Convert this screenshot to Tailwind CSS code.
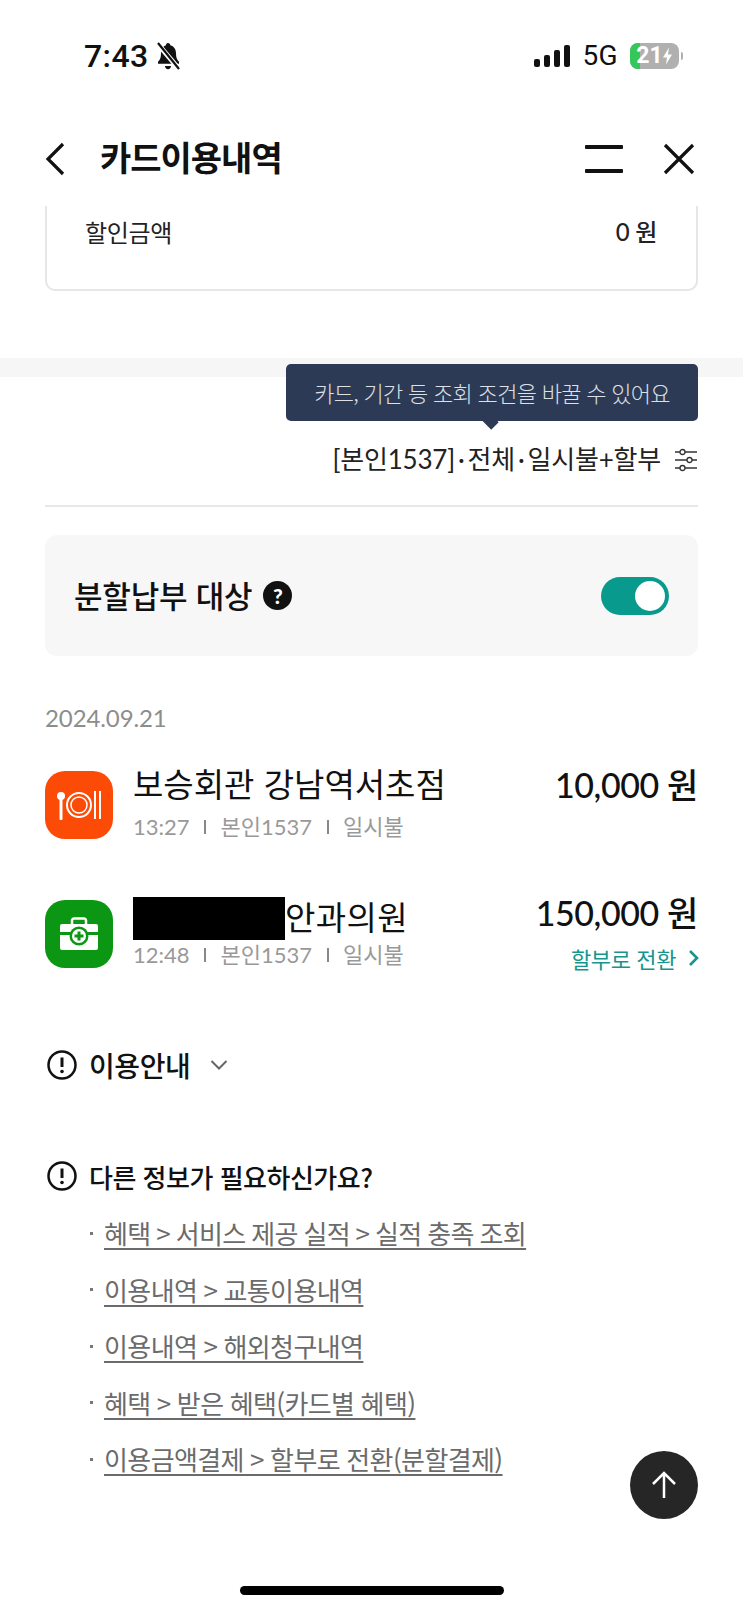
<!DOCTYPE html>
<html lang="ko">
<head>
    <meta charset="UTF-8">
    <meta name="viewport" content="width=device-width, initial-scale=1.0">
    <title>카드이용내역</title>
    <script src="https://cdn.jsdelivr.net/npm/@tailwindcss/browser@4"></script>
</head>
<body class="bg-white text-[#111] font-['Lato','Noto_Sans_CJK_KR',sans-serif] overflow-hidden">
<div class="relative w-[743px] h-[1611px] overflow-hidden">

    <!-- status bar -->
    <div class="flex justify-between items-center h-[112px] pl-[84px] pr-[60px]">
        <div class="flex items-center gap-[6px]">
            <span class="font-['Roboto',sans-serif] text-[32px] font-medium tracking-[0.4px]">7:43</span>
            <svg class="w-[26px] h-[28px]" viewBox="0 0 26 28" fill="#111"><path d="M13 1c1.400 0 2.200 1 2.300 2.200 3.700 1 5.700 4 5.700 8 0 4.500 1 6.500 3 8.500v2H3v-2c2-2 3-4 3-8.500 0-4 2-7 5-8C11 2 11.600 1 13 1z"/><path d="M10 24h6c0 2-1.300 3.200-3 3.200S10 26 10 24z"/><path d="M2 1l22 26" stroke="#fff" stroke-width="5"/><path d="M3 1l21 26" stroke="#111" stroke-width="2.200"/></svg>
        </div>
        <div class="flex items-center">
            <svg class="w-[37px] h-[24px]" viewBox="0 0 37 24" fill="#111"><rect x="1" y="15" width="6" height="8" rx="2"/><rect x="11" y="11" width="6" height="12" rx="2"/><rect x="21" y="6" width="6" height="17" rx="2"/><rect x="31" y="1" width="6" height="22" rx="2"/></svg>
            <span class="font-['Roboto',sans-serif] text-[28px] ml-[12px] mr-[12px] tracking-[0.4px]">5G</span>
            <div class="relative w-[49px] h-[26px] rounded-[8px] bg-[#b0b0b0] overflow-hidden flex items-center justify-center">
                <div class="absolute left-0 top-0 bottom-0 w-[10px] bg-[#34c759]"></div>
                <span class="relative font-['Roboto',sans-serif] font-bold text-white text-[23px] -ml-[10px]">21</span>
                <svg class="absolute right-[6px] top-[4px] w-[11px] h-[18px]" viewBox="0 0 11 17" fill="#fff"><path d="M7 0L1 10h4l-1 7 6-10H6z"/></svg>
            </div>
            <div class="w-[2px] h-[8px] ml-[2px] bg-[#b0b0b0] rounded-r-sm"></div>
        </div>
    </div>

    <!-- header -->
    <div class="relative z-10 flex items-center h-[94px] bg-white pl-[45px] pr-[48px]">
        <svg class="w-[20px] h-[34px]" viewBox="0 0 20 34" fill="none" stroke="#111" stroke-width="3.200"><path d="M18 2L3 17l15 15"/></svg>
        <h1 class="ml-[35px] -mt-[5px] font-['Noto_Sans_CJK_KR',sans-serif] text-[34px] font-bold tracking-[-1px] flex-1">카드이용내역</h1>
        <svg class="w-[38px] h-[30px] mr-[40px]" viewBox="0 0 38 30" fill="#111"><rect x="0" y="1" width="38" height="4" rx="1"/><rect x="0" y="25" width="38" height="4" rx="1"/></svg>
        <svg class="w-[32px] h-[32px]" viewBox="0 0 32 32" fill="none" stroke="#111" stroke-width="3.200"><path d="M2 2l28 28M30 2L2 30"/></svg>
    </div>

    <!-- summary card tail -->
    <div class="mx-[45px] h-[85px] border-x-2 border-b-2 border-[#e6e6e6] rounded-b-[10px] flex justify-between items-start pl-[38px] pr-[39px] pt-[8px] font-['Noto_Sans_CJK_KR',sans-serif] text-[24px] text-[#222] tracking-[-0.3px]">
        <span>할인금액</span>
        <span class="font-['Lato','Noto_Sans_CJK_KR',sans-serif] font-medium">0 원</span>
    </div>

    <!-- grey band -->
    <div class="h-[19px] mt-[67px] bg-[#f6f6f6]"></div>

    <!-- filter row -->
    <div class="relative mx-[45px]">
        <div class="absolute right-0 -top-[13px] w-[412px] h-[57px] bg-[#2d3a55] rounded-[5px] flex items-center justify-center text-[#dde0e6] text-[22px] font-['Noto_Sans_CJK_KR',sans-serif] font-light tracking-[-0.7px]">
            카드, 기간 등 조회 조건을 바꿀 수 있어요
            <div class="absolute left-[197px] -bottom-[7px] w-[14px] h-[14px] bg-[#2d3a55] rotate-45 scale-y-75"></div>
        </div>
        <div class="flex justify-end items-center h-[130px] pt-[37px] border-b-2 border-[#e8e8e8] text-[26px] text-[#222]">
            <span class="tracking-[-0.2px]">[본인1537]<span class="mx-[3px]">·</span>전체<span class="mx-[3px]">·</span>일시불+할부</span>
            <svg class="w-[24px] h-[24px] ml-[13px]" viewBox="0 0 24 24" fill="none" stroke="#333" stroke-width="1.300"><path d="M1 4h5M11 4h12M1 12h12M18 12h5M1 20h5M11 20h12"/><circle cx="8.500" cy="4" r="2.500"/><circle cx="15.500" cy="12" r="2.500"/><circle cx="8.500" cy="20" r="2.500"/></svg>
        </div>

        <!-- installment toggle -->
        <div class="mt-[28px] h-[121px] bg-[#f7f7f7] rounded-[12px] flex items-center justify-between pl-[29px] pr-[29px]">
            <div class="flex items-center gap-[11px]">
                <span class="font-['Noto_Sans_CJK_KR',sans-serif] text-[31px] font-medium tracking-[-0.2px]">분할납부 대상</span>
                <span class="w-[29px] h-[29px] rounded-full bg-[#111] text-white flex items-center justify-center text-[21px] font-black">?</span>
            </div>
            <div class="w-[68px] h-[38px] rounded-full bg-[#099a8e] flex items-center justify-end pr-[4px]">
                <div class="w-[30px] h-[30px] rounded-full bg-white"></div>
            </div>
        </div>

        <!-- list -->
        <div class="mt-[47px] text-[24px] text-[#8d8d8d] leading-[30px] tracking-[-0.1px]">2024.09.21</div>

        <div class="flex mt-[35px] h-[68px]">
            <div class="w-[68px] h-[68px] mt-[3px] rounded-[20px] bg-[#fb4b06] flex items-center justify-center">
                <svg class="w-[44px] h-[30px]" viewBox="0 0 44 30" fill="none" stroke="#fff"><circle cx="4" cy="6" r="4" fill="#fff" stroke="none"/><rect x="2.500" y="6" width="3" height="24" rx="1" fill="#fff" stroke="none"/><circle cx="22" cy="15" r="12" stroke-width="2"/><circle cx="22" cy="15" r="8" stroke-width="1.500"/><path d="M38 1v28M43 1v28" stroke-width="2"/></svg>
            </div>
            <div class="ml-[20px] flex-1">
                <div class="text-[33px] leading-[40px] -mt-[5px] font-['Noto_Sans_CJK_KR',sans-serif] text-[#111]">보승회관 강남역서초점</div>
                <div class="mt-[9px] text-[22px] leading-[30px] text-[#999] flex items-center"><span>13:27</span><span class="w-[2px] h-[14px] bg-[#888] mx-[14.5px]"></span><span>본인1537</span><span class="w-[2px] h-[14px] bg-[#888] mx-[14.5px]"></span><span>일시불</span></div>
            </div>
            <div class="text-[34px] leading-[42px] -mt-[4px] font-medium tracking-[-0.4px]">10,000 원</div>
        </div>

        <div class="flex mt-[61px] h-[72px]">
            <div class="w-[68px] h-[68px] mt-[3px] rounded-[20px] bg-[#0b9713] flex items-center justify-center">
                <svg class="w-[38px] h-[34px]" viewBox="0 0 38 34" fill="none"><path d="M12 8V3.500C12 2.500 13 1.500 14 1.500h10c1 0 2 1 2 2V8" stroke="#fff" stroke-width="2.500"/><path d="M2 7h34a2 2 0 012 2v6H0V9a2 2 0 012-2zM0 18h38v13a2 2 0 01-2 2H2a2 2 0 01-2-2z" fill="#fff"/><circle cx="19" cy="19" r="9.500" fill="#0b9713"/><circle cx="19" cy="19" r="7" fill="#fff"/><path d="M19 14.500v9M14.500 19h9" stroke="#0b9713" stroke-width="3"/></svg>
            </div>
            <div class="ml-[20px] flex-1">
                <div class="flex items-center h-[43px]">
                    <span class="w-[152px] h-[43px] bg-black"></span>
                    <span class="text-[33px] leading-[40px] -mt-[6px] font-['Noto_Sans_CJK_KR',sans-serif] text-[#111] tracking-[0.4px]">안과의원</span>
                </div>
                <div class="text-[22px] leading-[30px] text-[#999] flex items-center"><span>12:48</span><span class="w-[2px] h-[14px] bg-[#888] mx-[14.5px]"></span><span>본인1537</span><span class="w-[2px] h-[14px] bg-[#888] mx-[14.5px]"></span><span>일시불</span></div>
            </div>
            <div class="flex flex-col items-end -mt-[5px]">
                <div class="text-[34px] leading-[42px] font-medium tracking-[-0.4px]">150,000 원</div>
                <div class="mt-[9px] flex items-center text-[22px] leading-[30px] text-[#16958c] font-['Noto_Sans_CJK_KR',sans-serif] tracking-[-0.4px]">할부로 전환
                    <svg class="w-[12px] h-[18px] ml-[12px] -mr-[2px]" viewBox="0 0 12 18" fill="none" stroke="#16958c" stroke-width="2.600"><path d="M2 2l7 7-7 7"/></svg>
                </div>
            </div>
        </div>

        <!-- notice -->
        <div class="flex items-center mt-[76px] h-[40px] pl-[2px] font-['Noto_Sans_CJK_KR',sans-serif]">
            <svg class="w-[30px] h-[30px]" viewBox="0 0 30 30" fill="none" stroke="#111" stroke-width="2.500"><circle cx="15" cy="15" r="13.500"/><path d="M15 7.500v9.500" stroke-width="3"/><circle cx="15" cy="21.500" r="1.800" fill="#111" stroke="none"/></svg>
            <span class="ml-[12px] text-[28px] font-medium tracking-[-0.4px]">이용안내</span>
            <svg class="w-[18px] h-[12px] ml-[20px]" viewBox="0 0 18 12" fill="none" stroke="#666" stroke-width="2"><path d="M1.500 2L9 9.500 16.500 2"/></svg>
        </div>

        <div class="flex items-center mt-[71px] h-[40px] pl-[2px] font-['Noto_Sans_CJK_KR',sans-serif]">
            <svg class="w-[30px] h-[30px]" viewBox="0 0 30 30" fill="none" stroke="#111" stroke-width="2.500"><circle cx="15" cy="15" r="13.500"/><path d="M15 7.500v9.500" stroke-width="3"/><circle cx="15" cy="21.500" r="1.800" fill="#111" stroke="none"/></svg>
            <span class="ml-[12px] text-[26px] font-medium tracking-[-0.5px]">다른 정보가 필요하신가요?</span>
        </div>

        <ul class="mt-[20px] ml-[45px] space-y-[22.5px] text-[26px] leading-[34px] text-[#6b6b6b] font-['Noto_Sans_CJK_KR',sans-serif] tracking-[-0.6px] [word-spacing:-0.5px]">
            <li class="flex items-center [word-spacing:-1.100px]"><span class="w-[3px] h-[3px] bg-[#777] mr-[11px]"></span><a class="underline decoration-2 underline-offset-[4px]">혜택 &gt; 서비스 제공 실적 &gt; 실적 충족 조회</a></li>
            <li class="flex items-center"><span class="w-[3px] h-[3px] bg-[#777] mr-[11px]"></span><a class="underline decoration-2 underline-offset-[4px]">이용내역 &gt; 교통이용내역</a></li>
            <li class="flex items-center"><span class="w-[3px] h-[3px] bg-[#777] mr-[11px]"></span><a class="underline decoration-2 underline-offset-[4px]">이용내역 &gt; 해외청구내역</a></li>
            <li class="flex items-center"><span class="w-[3px] h-[3px] bg-[#777] mr-[11px]"></span><a class="underline decoration-2 underline-offset-[4px]">혜택 &gt; 받은 혜택(카드별 혜택)</a></li>
            <li class="flex items-center"><span class="w-[3px] h-[3px] bg-[#777] mr-[11px]"></span><a class="underline decoration-2 underline-offset-[4px]">이용금액결제 &gt; 할부로 전환(분할결제)</a></li>
        </ul>
    </div>

    <!-- scroll top -->
    <div class="absolute left-[630px] top-[1451px] w-[68px] h-[68px] rounded-full bg-[#262626] flex items-center justify-center">
        <svg class="w-[26px] h-[28px]" viewBox="0 0 26 28" fill="none" stroke="#fff" stroke-width="2.500"><path d="M13 27V2M2 13L13 2l11 11"/></svg>
    </div>

    <!-- home indicator -->
    <div class="absolute left-[240px] top-[1586px] w-[264px] h-[9px] rounded-full bg-black"></div>
</div>
</body>
</html>
